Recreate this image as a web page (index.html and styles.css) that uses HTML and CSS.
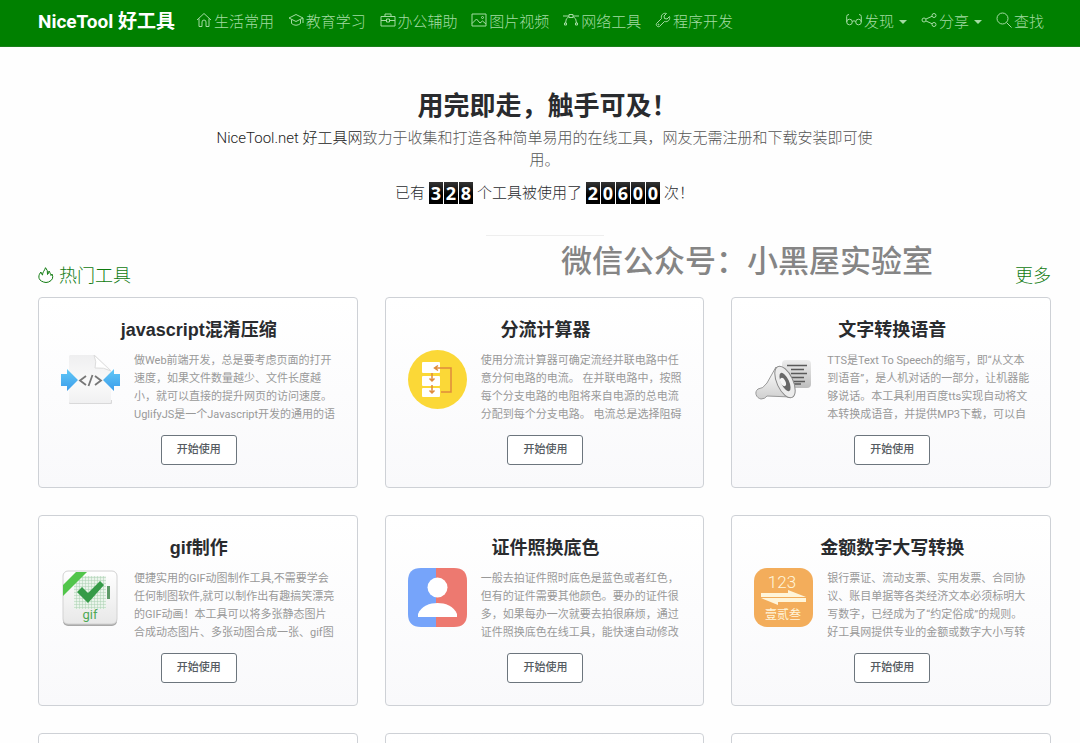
FILE: index.html
```html
<!DOCTYPE html>
<html lang="zh-CN">
<head>
<meta charset="utf-8">
<meta name="viewport" content="width=device-width, initial-scale=1">
<title>NiceTool 好工具</title>
<link rel="stylesheet" href="styles.css">
</head>
<body>
<header class="navbar">
  <a class="brand" href="#">NiceTool 好工具</a>
  <nav class="nav-main">
    <a class="nav-link" href="#"><svg class="icon" viewBox="0 0 16 16"><path d="M1 8 8 1.500 15 8M3 6.500V14.500H6V10a2 2 0 0 1 4 0V14.500H13V6.500"/></svg>生活常用</a>
    <a class="nav-link" href="#"><svg class="icon" viewBox="0 0 16 16"><path d="M1 6 8 2.500 15 6 8 9.500ZM3.500 7.500V11.500Q8 15 12.500 11.500V7.500M15 6V11"/></svg>教育学习</a>
    <a class="nav-link" href="#"><svg class="icon" viewBox="0 0 16 16"><path d="M1 4.500H15V14H1ZM5 4.500V2H11V4.500M1 8.500H6M10 8.500H15M6.500 7H9.500V10H6.500Z"/></svg>办公辅助</a>
    <a class="nav-link" href="#"><svg class="icon" viewBox="0 0 16 16"><path d="M1 2H15V14H1ZM1 11.500 5.500 7 9 11 11.500 9 15 12"/><circle cx="11.500" cy="5.500" r="1"/></svg>图片视频</a>
    <a class="nav-link" href="#"><svg class="icon" viewBox="0 0 16 16"><path d="M0 4H6M10 4H16M6 2.500H10V5.500H6ZM6 4.500Q2.500 6 2.500 11M10 4.500Q13.500 6 13.500 11M1.500 11H3.500V13H1.500ZM12.500 11H14.500V13H12.500Z"/></svg>网络工具</a>
    <a class="nav-link" href="#"><svg class="icon" viewBox="0 0 16 16"><path d="M14.500 4.500 12 7 9.500 6.500 9 4 11.500 1.500C8.500.5 5.500 3 6.500 6.500L1.500 11.500C.5 13 2.500 15.500 4.500 14.500L9.500 9.500C13 10.500 15.500 7.500 14.500 4.500Z"/><circle cx="3.500" cy="12.500" r=".5"/></svg>程序开发</a>
  </nav>
  <div class="nav-side">
    <button class="nav-link" type="button"><svg class="icon" viewBox="0 0 16 16"><circle cx="3.500" cy="10" r="2.800"/><circle cx="12.500" cy="10" r="2.800"/><path d="M.7 10V4.500Q.7 2.500 3 2.500M6.300 9.500Q8 8 9.700 9.500M15.300 10V4.500Q15.300 2.500 13 2.500"/></svg>发现<span class="caret"></span></button>
    <button class="nav-link" type="button"><svg class="icon" viewBox="0 0 16 16"><circle cx="3" cy="8" r="2"/><circle cx="13" cy="3.500" r="2"/><circle cx="13" cy="12.500" r="2"/><path d="M5 7 11 4.300M5 9 11 11.700"/></svg>分享<span class="caret"></span></button>
    <a class="nav-link" href="#"><svg class="icon" viewBox="0 0 16 16"><circle cx="6.500" cy="6.500" r="5.500"/><path d="M10.500 10.500 15.500 15.500"/></svg>查找</a>
  </div>
</header>

<main class="page">
  <section class="hero">
    <h1 class="hero-title">用完即走，触手可及！</h1>
    <p class="lead"><span class="lead-name">NiceTool.net 好工具网</span>致力于收集和打造各种简单易用的在线工具，网友无需注册和下载安装即可使用。</p>
    <p class="stats">已有 <span class="counter"><b>3</b><b>2</b><b>8</b></span> 个工具被使用了 <span class="counter"><b>2</b><b>0</b><b>6</b><b>0</b><b>0</b></span> 次！</p>
    <hr class="divider">
  </section>

  <section class="tools">
    <div class="tools-head">
      <h2 class="tools-title"><svg class="icon" viewBox="0 0 16 16"><path d="M5.500 15C-1 13 .5 7.500 3 5Q3 7.500 4.500 8C4.500 5 6.500 4 7.500.7Q10 3 9.500 7.500 11 6.500 11 4C12.500 6.500 12.500 7 13 8.500L14 7Q16.500 12.500 10.500 15M5.500 15Q8 16 10.500 15"/></svg>热门工具</h2>
      <a class="more" href="#">更多</a>
      <p class="watermark">微信公众号：小黑屋实验室</p>
    </div>

    <div class="grid">
      <article class="card">
        <h3 class="card-title">javascript混淆压缩</h3>
        <div class="card-body">
          <svg class="art" viewBox="0 0 59 59">
            <defs>
              <linearGradient id="paper" x2="0" y2="1"><stop stop-color="#efeff0"/><stop offset=".6" stop-color="#fafafa"/><stop offset="1" stop-color="#f0f0f1"/></linearGradient>
              <linearGradient id="blue" x2="0" y2="1"><stop stop-color="#62c9f7"/><stop offset="1" stop-color="#3b9cea"/></linearGradient>
            </defs>
            <path d="M8 50H51V53Q51 54 50 54H9Q8 54 8 53Z" fill="#d9d9da"/>
            <path d="M9 5H34L50 20V52Q50 53 49 53H9Q8 53 8 52V6Z" fill="url(#paper)"/>
            <path d="M33 5Q36 12 34 18 43 17 50 21Z" fill="#fff" stroke="#ddd"/>
            <path d="M0 24H6V19L17 30 6 41V36H0ZM59 24H53V19L42 30 53 41V36H59Z" fill="url(#blue)"/>
            <path d="M25 26 19 30.500 25 35M34 26 40 30.500 34 35M31.500 25 27.500 36" fill="none" stroke="#777" stroke-width="1.800"/>
          </svg>
          <p class="desc">做Web前端开发，总是要考虑页面的打开速度，如果文件数量越少、文件长度越小，就可以直接的提升网页的访问速度。UglifyJS是一个Javascript开发的通用的语</p>
        </div>
        <button class="use" type="button">开始使用</button>
      </article>

      <article class="card">
        <h3 class="card-title">分流计算器</h3>
        <div class="card-body">
          <svg class="art" viewBox="0 0 59 59">
            <circle cx="29.500" cy="29.500" r="29.500" fill="#fbd837"/>
            <g fill="#fff"><rect x="14" y="12" width="18" height="11" rx="1"/><rect x="14" y="26" width="18" height="10" rx="1"/><rect x="14" y="38" width="18" height="9" rx="1"/></g>
            <path d="M27 18H43V42H33M30 15.500 26.500 18 30 20.500M24 23V31M21.500 28.500 24 31 26.500 28.500M24 35V43M21.500 40.500 24 43 26.500 40.500" fill="none" stroke="#df8b3c" stroke-width="1.500"/>
          </svg>
          <p class="desc">使用分流计算器可确定流经并联电路中任意分何电路的电流。 在并联电路中，按照每个分支电路的电阻将来自电源的总电流分配到每个分支电路。 电流总是选择阻碍</p>
        </div>
        <button class="use" type="button">开始使用</button>
      </article>

      <article class="card">
        <h3 class="card-title">文字转换语音</h3>
        <div class="card-body">
          <svg class="art" viewBox="0 0 59 59">
            <defs>
              <linearGradient id="horn" x2="0" y2="1"><stop stop-color="#fff"/><stop offset="1" stop-color="#cfcfcf"/></linearGradient>
              <linearGradient id="note" x2="0" y2="1"><stop stop-color="#ededed"/><stop offset="1" stop-color="#bdbdbd"/></linearGradient>
            </defs>
            <rect x="28" y="10" width="29" height="28" rx="4" fill="url(#note)"/>
            <path d="M33 15.500H53M37 19.500H50M37 23.500H53M37 27.500H50M37 31.500H51M40 34H47" stroke="#5a5a5a" stroke-width="1.500"/>
            <path d="M22 17 13 33Q9 39 4 39C0 42 2 48 7 49Q11 49 13 46L37 47Z" fill="url(#horn)" stroke="#999"/>
            <ellipse cx="31" cy="32" rx="8" ry="17" transform="rotate(-25 31 32)" fill="#ececec" stroke="#888"/>
            <ellipse cx="31" cy="32" rx="4" ry="10" transform="rotate(-25 31 32)" fill="#686868"/>
            <ellipse cx="29" cy="32" rx="2.500" ry="4.500" transform="rotate(-25 29 32)" fill="#f6f6f6"/>
          </svg>
          <p class="desc">TTS是Text To Speech的缩写，即“从文本到语音”，是人机对话的一部分，让机器能够说话。本工具利用百度tts实现自动将文本转换成语音，并提供MP3下载，可以自</p>
        </div>
        <button class="use" type="button">开始使用</button>
      </article>

      <article class="card">
        <h3 class="card-title">gif制作</h3>
        <div class="card-body">
          <svg class="art" viewBox="0 0 59 59">
            <defs>
              <linearGradient id="tile" x2="0" y2="1"><stop stop-color="#fff"/><stop offset="1" stop-color="#e8e8e8"/></linearGradient>
              <pattern id="mesh" width="3" height="3" patternUnits="userSpaceOnUse"><path d="M0 0H3M0 0V3" stroke="#a9cfb1" fill="none"/></pattern>
            </defs>
            <rect x="2" y="5" width="54" height="53" rx="5" fill="#a9a9a9"/>
            <rect x="2" y="3" width="54" height="53" rx="5" fill="url(#tile)" stroke="#d2d2d2"/>
            <rect x="13" y="8" width="32" height="33" fill="#eaf4eb"/><rect x="13" y="8" width="32" height="33" fill="url(#mesh)"/>
            <path d="M46 18H49V31H46Z" fill="#5e9a68"/>
            <path d="M2 17V28L26 4H15Z" fill="#52c54b"/>
            <path d="M16 24 21 19 27 25 39 13 43 17 27 35Z" fill="#359b48"/>
            <text x="29" y="51" class="art-gif">gif</text>
          </svg>
          <p class="desc">便捷实用的GIF动图制作工具,不需要学会任何制图软件,就可以制作出有趣搞笑漂亮的GIF动画！本工具可以将多张静态图片合成动态图片、多张动图合成一张、gif图</p>
        </div>
        <button class="use" type="button">开始使用</button>
      </article>

      <article class="card">
        <h3 class="card-title">证件照换底色</h3>
        <div class="card-body">
          <svg class="art" viewBox="0 0 59 59">
            <path d="M29 0H13Q0 0 0 13V46Q0 59 13 59H29Z" fill="#76a4fa"/>
            <path d="M28 0H46Q59 0 59 13V46Q59 59 46 59H28Z" fill="#ed7970"/>
            <circle cx="29.500" cy="19.500" r="10" fill="#fff"/>
            <path d="M10 49V46C13 38 22 35 29.500 35S46 38 49 46V49Z" fill="#fff"/>
          </svg>
          <p class="desc">一般去拍证件照时底色是蓝色或者红色，但有的证件需要其他颜色。要办的证件很多，如果每办一次就要去拍很麻烦，通过证件照换底色在线工具，能快速自动修改</p>
        </div>
        <button class="use" type="button">开始使用</button>
      </article>

      <article class="card">
        <h3 class="card-title">金额数字大写转换</h3>
        <div class="card-body">
          <svg class="art" viewBox="0 0 59 59">
            <rect width="59" height="59" rx="13" fill="#f3ad5b"/>
            <path d="M7 25H34V22L52 29H7ZM52 30H7L24 37V34H52Z" fill="#fff5da"/>
            <text x="28" y="20" class="art-num">123</text>
            <text x="29" y="51" class="art-cn">壹贰叁</text>
          </svg>
          <p class="desc">银行票证、流动支票、实用发票、合同协议、账目单据等各类经济文本必须标明大写数字，已经成为了“约定俗成”的规则。好工具网提供专业的金额或数字大小写转</p>
        </div>
        <button class="use" type="button">开始使用</button>
      </article>

      <article class="card"></article>
      <article class="card"></article>
      <article class="card"></article>
    </div>
  </section>
</main>
</body>
</html>
```
FILE: styles.css
```css
* { box-sizing: border-box; }

html { scrollbar-width: none; }

body {
  margin: 0;
  background: #fefefe;
  color: #292b2e;
  font-family: Roboto, "Noto Sans CJK SC", sans-serif;
  font-size: 15px;
  line-height: 22px;
}

h1, h2, h3, p { margin: 0; }

a { color: inherit; text-decoration: none; }

button {
  margin: 0;
  padding: 0;
  border: 0;
  background: none;
  font: inherit;
}

.icon {
  flex: none;
  width: 16px;
  height: 16px;
  fill: none;
  stroke: currentColor;
  stroke-width: 1;
}

/* Top bar */
.navbar {
  display: flex;
  align-items: center;
  padding: 11px 36px 13px 38px;
  background: #008000;
  border-bottom: 1px solid #1a7f1a;
}

.brand {
  margin-right: 21px;
  color: #fff;
  font-size: 19px;
  font-weight: 700;
  white-space: nowrap;
}

.nav-main {
  display: flex;
  flex: 0 1 537px;
  justify-content: space-between;
}

.nav-side {
  display: flex;
  gap: 14px;
  margin-left: auto;
}

.nav-link {
  display: flex;
  align-items: center;
  gap: 2px;
  color: #a3dba3;
  font-weight: 300;
  white-space: nowrap;
}

.nav-link .icon { margin-bottom: 4px; }

.caret {
  margin-left: 3px;
  border: 4px solid transparent;
  border-top-color: currentColor;
  border-bottom: 0;
}

/* Intro */
.page { padding: 0 29px 0 38px; }

.hero {
  display: flex;
  flex-direction: column;
  align-items: center;
  padding-top: 43px;
  text-align: center;
}

.hero-title {
  margin-bottom: 5px;
  padding-left: 6px;
  font-size: 26px;
  line-height: 32px;
}

.lead {
  max-width: 660px;
  margin-bottom: 11px;
  color: #555;
  font-weight: 300;
}

.lead-name { color: #222; }

.stats {
  display: flex;
  gap: 4px;
  margin-bottom: 31px;
  font-weight: 300;
}

.counter { display: flex; gap: 1px; }

.counter b {
  width: 14px;
  background: linear-gradient(#333, #000 60%);
  color: #fff;
  font-family: "Open Sans", sans-serif;
  font-size: 18px;
  font-weight: 700;
}

.divider {
  width: 118px;
  margin: 0;
  border: 0;
  border-top: 1px solid #eee;
}

/* Tool list */
.tools { padding: 28px 0; }

.tools-head {
  position: relative;
  display: flex;
  justify-content: space-between;
  margin-bottom: 9px;
  color: #0f7a0f;
  font-size: 18px;
  line-height: 24px;
}

.tools-title {
  display: flex;
  align-items: center;
  gap: 5px;
  font-size: 18px;
  font-weight: 300;
}

.tools-title .icon { margin-bottom: 2px; }

.more { font-weight: 300; }

.watermark {
  position: absolute;
  left: 523px;
  bottom: 8px;
  color: #858585;
  font-size: 31px;
  font-weight: 500;
  line-height: 36px;
  white-space: nowrap;
}

.grid {
  display: grid;
  grid-template-columns: repeat(3, minmax(0, 1fr));
  gap: 27px;
}

.card {
  display: flex;
  flex-direction: column;
  align-items: center;
  min-height: 191px;
  padding: 21px 20px 22px 22px;
  border: 1px solid #ced1d6;
  border-radius: 4px;
  background: linear-gradient(#fff, #f9f9fb);
}

.card-title {
  margin-bottom: 9px;
  font-family: "Liberation Sans", "Noto Sans CJK SC", sans-serif;
  font-size: 18px;
  line-height: 22px;
}

.card-body {
  display: flex;
  align-items: flex-start;
  gap: 14px;
  align-self: stretch;
}

.art { flex: none; width: 59px; height: 59px; }

.art-gif, .art-num, .art-cn { text-anchor: middle; }
.art-gif { fill: #4da956; font-size: 13px; }
.art-num { fill: #fff5da; font-size: 17px; font-weight: 300; }
.art-cn { fill: #fff5da; font-size: 12px; }

.desc {
  flex: 1;
  min-width: 0;
  padding-top: 2px;
  color: #999;
  font-size: 11px;
  line-height: 18px;
}

.use {
  margin-top: 11px;
  padding: 5px 15px;
  border: 1px solid #6c757d;
  border-radius: 3px;
  background: #fff;
  color: #555b61;
  font-size: 11px;
  font-weight: 500;
  line-height: 18px;
}
```
